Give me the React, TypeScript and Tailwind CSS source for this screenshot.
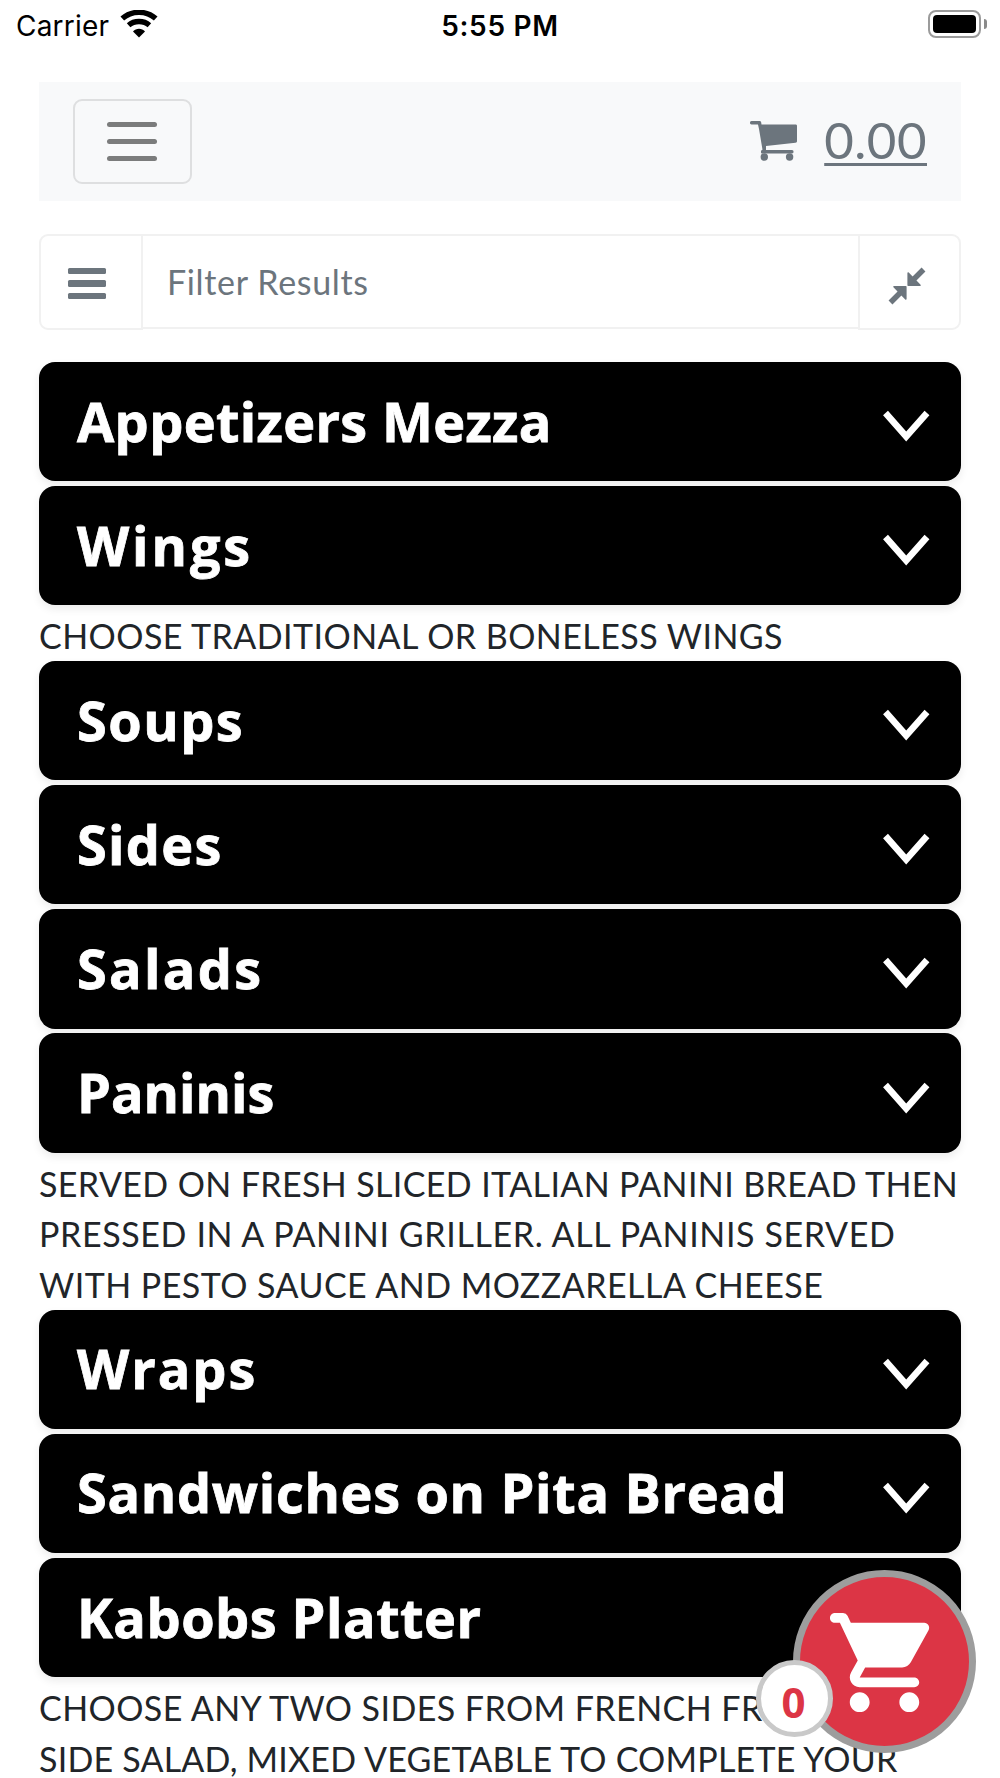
import { useState } from 'react'

type Category = {
  title: string
  tracking: string
  note?: { text: string; tracking: string }[]
}

const categories: Category[] = [
  { title: 'Appetizers Mezza', tracking: 'tracking-[0.35px]' },
  {
    title: 'Wings',
    tracking: 'tracking-[2.9px]',
    note: [{ text: 'CHOOSE TRADITIONAL OR BONELESS WINGS', tracking: 'tracking-[0.45px]' }],
  },
  { title: 'Soups', tracking: 'tracking-[1.5px]' },
  { title: 'Sides', tracking: 'tracking-[1.3px]' },
  { title: 'Salads', tracking: 'tracking-[2.3px]' },
  {
    title: 'Paninis',
    tracking: 'tracking-[0px]',
    note: [
      { text: 'SERVED ON FRESH SLICED ITALIAN PANINI BREAD THEN', tracking: 'tracking-[0.38px]' },
      { text: 'PRESSED IN A PANINI GRILLER. ALL PANINIS SERVED', tracking: 'tracking-[0.62px]' },
      { text: 'WITH PESTO SAUCE AND MOZZARELLA CHEESE', tracking: 'tracking-[0.47px]' },
    ],
  },
  { title: 'Wraps', tracking: 'tracking-[2px]' },
  { title: 'Sandwiches on Pita Bread', tracking: 'tracking-[0.7px]' },
  {
    title: 'Kabobs Platter',
    tracking: 'tracking-[0.5px]',
    note: [
      { text: 'CHOOSE ANY TWO SIDES FROM FRENCH FRIES,', tracking: 'tracking-[0.43px]' },
      { text: 'SIDE SALAD, MIXED VEGETABLE TO COMPLETE YOUR', tracking: 'tracking-[0.21px]' },
    ],
  },
]

function StatusBar() {
  return (
    <div className="grid h-[82px] grid-cols-3 items-start pr-[13px] pl-[16px] font-['Inter',sans-serif] text-black">
      <div className="flex pt-[6px]">
        <span className="text-[28px] leading-[40px] tracking-[0.2px]">Carrier</span>
        <svg viewBox="0 0 38 28" className="mt-[4px] ml-[11px] h-[28px] w-[38px]" fill="none" stroke="#000">
          <path d="M2.3 8.6C11.5 .2 26.5 .2 35.7 8.6" strokeWidth="5.4" />
          <path d="M8.6 15.2C14.2 10.3 23.8 10.3 29.4 15.2" strokeWidth="5.4" />
          <path d="M13 21.4C16.2 18 21.8 18 25 21.4L19 27.4Z" fill="#000" stroke="none" />
        </svg>
      </div>
      <span className="pt-[6px] pr-[3px] text-center text-[28px] leading-[40px] font-semibold tracking-[0.7px]">
        5:55 PM
      </span>
      <div className="flex items-center justify-end pt-[10px]">
        <div className="h-[28px] w-[53px] rounded-[8px] border-2 border-[#9b9b9b] p-[3px]">
          <div className="h-full rounded-[4px] bg-black" />
        </div>
        <div className="ml-[3px] h-[10px] w-[3px] rounded-r-full bg-[#8a8a8a]" />
      </div>
    </div>
  )
}

function NavBar() {
  return (
    <nav className="flex h-[118.5px] items-center justify-between bg-[#f8f9fa] px-[34px]">
      <button
        type="button"
        aria-label="Menu"
        className="flex h-[85px] w-[119px] flex-col items-center justify-center gap-[12px] rounded-[9px] border-2 border-[#dedfe0] pr-[2px]"
      >
        <span className="h-[5px] w-[50px] rounded-full bg-[#7b7c7c]" />
        <span className="h-[5px] w-[50px] rounded-full bg-[#7b7c7c]" />
        <span className="h-[5px] w-[50px] rounded-full bg-[#7b7c7c]" />
      </button>
      <a href="#cart" className="flex items-center text-[#6c757d]">
        <svg viewBox="0 0 48 42" className="mb-[1px] h-[42px] w-[48px]" fill="currentColor">
          <path d="M1.5 1H9.5C10.5 1 11 1.5 11.2 2.5L11.5 4.5H45.5C46.5 4.5 47 5 47 6V21C47 22 46.5 22.6 45.5 22.7L16 26V30H42C44 30 44 33.5 42 33.5H12C10.5 33.5 10.5 30 12.5 29.7L9 9L8 4.5H1.5C-.5 4.5-.5 1 1.5 1Z" />
          <circle cx="14.3" cy="37" r="3.7" />
          <circle cx="39.6" cy="37" r="3.7" />
        </svg>
        <span className="mb-[3px] ml-[26px] text-[51px] leading-[60px] tracking-[0.5px] underline decoration-[3px] underline-offset-[4px]">
          0.00
        </span>
      </a>
    </nav>
  )
}

function FilterBar() {
  return (
    <div className="mt-[33.5px] flex h-[96px] items-start">
      <button
        type="button"
        aria-label="Categories"
        className="flex h-[96px] w-[104px] flex-col items-center justify-center gap-[6px] rounded-l-[9px] border-2 border-[#f1f1f1] pt-[3px] pr-[8px]"
      >
        <span className="h-[6.5px] w-[38px] rounded-[1.5px] bg-[#6c757d]" />
        <span className="h-[6.5px] w-[38px] rounded-[1.5px] bg-[#6c757d]" />
        <span className="h-[6.5px] w-[38px] rounded-[1.5px] bg-[#6c757d]" />
      </button>
      <input
        placeholder="Filter Results"
        className="h-[95px] min-w-0 flex-1 border-y-2 border-[#f1f1f1] px-[24px] text-[34px] tracking-[0.65px] text-[#6c757d] placeholder:text-[#6c757d]"
      />
      <button
        type="button"
        aria-label="Collapse all"
        className="h-[96px] w-[103px] rounded-r-[9px] border-2 border-[#f1f1f1] pt-[7px] pl-[28px]"
      >
        <svg viewBox="0 0 38 38" className="h-[38px] w-[38px]" fill="#6c757d" stroke="#6c757d">
          <path d="M25 13L35.5 2.5M13 25L2.5 35.5" strokeWidth="5.5" />
          <path d="M20.2 6L32 18.2H20.2ZM17.8 32L6 19.8H17.8Z" strokeWidth="1.6" strokeLinejoin="round" />
        </svg>
      </button>
    </div>
  )
}

function CategoryRow({ category }: { category: Category }) {
  return (
    <section>
      <button
        type="button"
        className="mb-[4.9px] flex h-[119.25px] w-full items-center justify-between rounded-[16px] bg-black pr-[31px] pl-[38px] text-white shadow-[0_4px_8px_rgba(0,0,0,0.08)]"
      >
        <span
          className={`mb-[2px] font-['Open_Sans',sans-serif] text-[54px] leading-[60px] font-bold whitespace-nowrap [-webkit-text-stroke:0.8px_white] ${category.tracking}`}
        >
          {category.title}
        </span>
        <svg viewBox="0 0 48 34" className="mt-[9px] h-[34px] w-[48px]" fill="none" stroke="currentColor">
          <path d="M3.5 4L24.2 27.5L45 4" strokeWidth="6.5" />
        </svg>
      </button>
      {category.note?.map((line) => (
        <p
          key={line.text}
          className={`h-[50.7px] text-[34px] leading-[51px] whitespace-nowrap text-[#212529] ${line.tracking}`}
        >
          {line.text}
        </p>
      ))}
    </section>
  )
}

function FloatingCart({ count }: { count: number }) {
  return (
    <div className="absolute top-[1570px] left-[793px]">
      <div className="flex size-[183px] items-center justify-center rounded-full border-[7px] border-[#9d9d9d] bg-[#dc3545]">
        <svg viewBox="0 0 24 24" className="mt-[2px] size-[119px]" fill="#fff">
          <path d="M7 18c-1.1 0-2 .9-2 2s.9 2 2 2 2-.9 2-2-.9-2-2-2zm10 0c-1.1 0-2 .9-2 2s.9 2 2 2 2-.9 2-2-.9-2-2-2zM2 2c-.55 0-1 .45-1 1s.45 1 1 1h1l3.6 7.59-1.35 2.44C4.52 15.37 5.48 17 7 17h11c.55 0 1-.45 1-1s-.45-1-1-1H7l1.1-2h7.45c.75 0 1.41-.41 1.75-1.03l3.58-6.49A.996.996 0 0 0 20.01 4H5.21l-.67-1.43A.993.993 0 0 0 3.64 2H2z" />
        </svg>
      </div>
      <span className="absolute top-[89.5px] left-[-37px] flex size-[77px] items-center justify-center rounded-full border-[5px] border-[#c9c9c9] bg-white pt-[6px] pr-[2px] font-['Open_Sans',sans-serif] text-[42px] font-bold text-[#dc3545]">
        {count}
      </span>
    </div>
  )
}

export default function App() {
  const [count] = useState(0)

  return (
    <div className="relative h-[1778px] w-[1000px] overflow-hidden bg-white font-['Lato',sans-serif]">
      <StatusBar />
      <main className="mx-[39px]">
        <NavBar />
        <FilterBar />
        <div className="mt-[32px]">
          {categories.map((category) => (
            <CategoryRow key={category.title} category={category} />
          ))}
        </div>
      </main>
      <FloatingCart count={count} />
    </div>
  )
}
